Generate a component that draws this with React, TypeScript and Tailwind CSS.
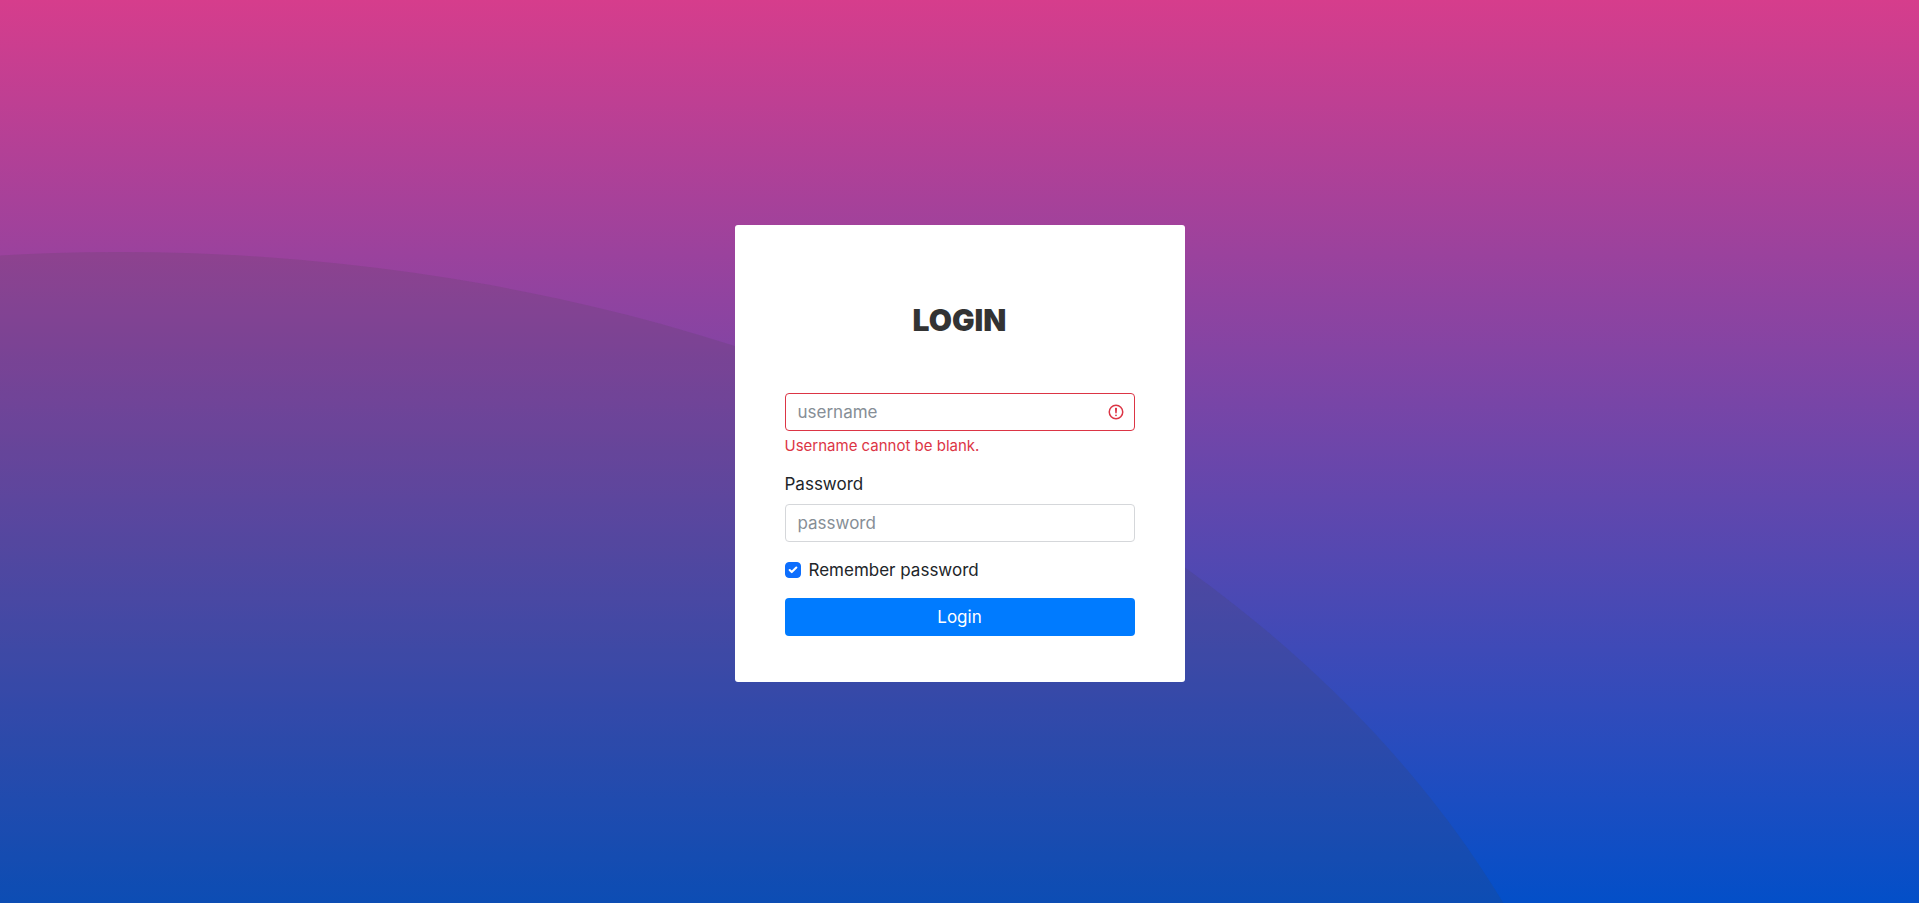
import { Check } from "lucide-react";

export default function App() {
  return (
    <div className="relative isolate flex min-h-screen items-center justify-center bg-[linear-gradient(to_bottom,#d63d8c,#034fc8)] px-4 pt-1 font-[Inter,sans-serif] text-[17px] leading-6 text-[#212529]">
      <svg
        className="absolute inset-0 -z-10 size-full"
        viewBox="0 0 1919 903"
        preserveAspectRatio="none"
        aria-hidden="true"
      >
        <ellipse cx="120" cy="1331" rx="1507" ry="1079" fill="#424242" fillOpacity="0.15" />
      </svg>

      <main className="w-full max-w-[450px] rounded-[3px] bg-white px-[50px] pt-20 pb-[46px]">
        <h1 className="pb-[58px] text-center text-[30px] leading-[30px] font-black text-[#333333]">
          LOGIN
        </h1>

        <form noValidate>
          <div className="relative">
            <input
              type="text"
              name="username"
              placeholder="username"
              aria-label="Username"
              aria-invalid="true"
              aria-describedby="username-error"
              className="block h-[38px] w-full rounded border border-[#dc3545] bg-white px-3 pr-10 outline-none placeholder:text-[#868e96]"
            />
            <svg
              className="pointer-events-none absolute top-[10px] right-[10px] size-[18px]"
              viewBox="0 0 12 12"
              fill="none"
              stroke="#dc3545"
              aria-hidden="true"
            >
              <circle cx="6" cy="6" r="4.5" />
              <path strokeLinejoin="round" d="M5.8 3.6h.4L6 6.5z" />
              <circle cx="6" cy="8.2" r="0.6" fill="#dc3545" stroke="none" />
            </svg>
          </div>
          <p id="username-error" className="mt-1 text-[15px] leading-[21px] text-[#dc3545]">
            Username cannot be blank.
          </p>

          <div className="mt-4">
            <label htmlFor="password" className="mb-2 block">
              Password
            </label>
            <input
              id="password"
              type="password"
              name="password"
              placeholder="password"
              className="block h-[38px] w-full rounded border border-[#d5d7da] bg-white px-3 outline-none placeholder:text-[#868e96]"
            />
          </div>

          <label className="mt-4 flex items-center">
            <input
              type="checkbox"
              name="remember"
              defaultChecked
              className="peer size-4 appearance-none rounded border border-[#adb5bd] checked:border-[#0d6efd] checked:bg-[#0d6efd]"
            />
            <Check
              className="pointer-events-none -ml-[13px] hidden size-[10px] text-white peer-checked:block"
              strokeWidth={5}
            />
            <span className="ml-[11px]">Remember password</span>
          </label>

          <button
            type="submit"
            className="mt-4 block h-[38px] w-full cursor-pointer rounded bg-[#007bff] text-white"
          >
            Login
          </button>
        </form>
      </main>
    </div>
  );
}
